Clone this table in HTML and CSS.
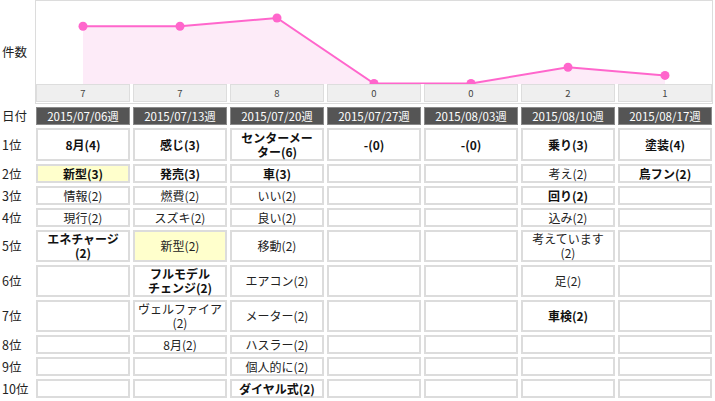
FILE: index.html
```html
<!DOCTYPE html>
<html lang="ja">
<head>
<meta charset="utf-8">
<link rel="stylesheet" href="styles.css">
</head>
<body>
<div class="table">
  <div class="label">件数</div>
  <div class="chart">
    <svg class="plot" width="676" height="83" viewBox="0 0 676 83">
      <polygon class="area" points="47,83 47,25.3 144,25.3 241,17 338,82.5 435,82.5 532,66.3 629,74.4 629,83"/>
      <polyline class="line" points="47,25.3 144,25.3 241,17 338,82.5 435,82.5 532,66.3 629,74.4"/>
      <circle class="dot" cx="47" cy="25.3" r="4.5"/>
      <circle class="dot" cx="144" cy="25.3" r="4.5"/>
      <circle class="dot" cx="241" cy="17" r="4.5"/>
      <circle class="dot" cx="338" cy="82.5" r="4.5"/>
      <circle class="dot" cx="435" cy="82.5" r="4.5"/>
      <circle class="dot" cx="532" cy="66.3" r="4.5"/>
      <circle class="dot" cx="629" cy="74.4" r="4.5"/>
    </svg>
    <div class="counts">
      <div class="count">7</div>
      <div class="count">7</div>
      <div class="count">8</div>
      <div class="count">0</div>
      <div class="count">0</div>
      <div class="count">2</div>
      <div class="count">1</div>
    </div>
  </div>

  <div class="label">日付</div>
  <div class="head">2015/07/06週</div>
  <div class="head">2015/07/13週</div>
  <div class="head">2015/07/20週</div>
  <div class="head">2015/07/27週</div>
  <div class="head">2015/08/03週</div>
  <div class="head">2015/08/10週</div>
  <div class="head">2015/08/17週</div>

  <div class="label">1位</div>
  <div class="cell b">8月(4)</div>
  <div class="cell b">感じ(3)</div>
  <div class="cell b">センターメー<br>ター(6)</div>
  <div class="cell b">-(0)</div>
  <div class="cell b">-(0)</div>
  <div class="cell b">乗り(3)</div>
  <div class="cell b">塗装(4)</div>

  <div class="label">2位</div>
  <div class="cell b hl">新型(3)</div>
  <div class="cell b">発売(3)</div>
  <div class="cell b">車(3)</div>
  <div class="cell"></div>
  <div class="cell"></div>
  <div class="cell">考え(2)</div>
  <div class="cell b">鳥フン(2)</div>

  <div class="label">3位</div>
  <div class="cell">情報(2)</div>
  <div class="cell">燃費(2)</div>
  <div class="cell">いい(2)</div>
  <div class="cell"></div>
  <div class="cell"></div>
  <div class="cell b">回り(2)</div>
  <div class="cell"></div>

  <div class="label">4位</div>
  <div class="cell">現行(2)</div>
  <div class="cell">スズキ(2)</div>
  <div class="cell">良い(2)</div>
  <div class="cell"></div>
  <div class="cell"></div>
  <div class="cell">込み(2)</div>
  <div class="cell"></div>

  <div class="label">5位</div>
  <div class="cell b">エネチャージ<br>(2)</div>
  <div class="cell hl">新型(2)</div>
  <div class="cell">移動(2)</div>
  <div class="cell"></div>
  <div class="cell"></div>
  <div class="cell">考えています<br>(2)</div>
  <div class="cell"></div>

  <div class="label">6位</div>
  <div class="cell"></div>
  <div class="cell b">フルモデル<br>チェンジ(2)</div>
  <div class="cell">エアコン(2)</div>
  <div class="cell"></div>
  <div class="cell"></div>
  <div class="cell">足(2)</div>
  <div class="cell"></div>

  <div class="label">7位</div>
  <div class="cell"></div>
  <div class="cell">ヴェルファイア<br>(2)</div>
  <div class="cell">メーター(2)</div>
  <div class="cell"></div>
  <div class="cell"></div>
  <div class="cell b">車検(2)</div>
  <div class="cell"></div>

  <div class="label">8位</div>
  <div class="cell"></div>
  <div class="cell">8月(2)</div>
  <div class="cell">ハスラー(2)</div>
  <div class="cell"></div>
  <div class="cell"></div>
  <div class="cell"></div>
  <div class="cell"></div>

  <div class="label">9位</div>
  <div class="cell"></div>
  <div class="cell"></div>
  <div class="cell">個人的に(2)</div>
  <div class="cell"></div>
  <div class="cell"></div>
  <div class="cell"></div>
  <div class="cell"></div>

  <div class="label">10位</div>
  <div class="cell"></div>
  <div class="cell"></div>
  <div class="cell b">ダイヤル式(2)</div>
  <div class="cell"></div>
  <div class="cell"></div>
  <div class="cell"></div>
  <div class="cell"></div>
</div>
</body>
</html>
```
FILE: styles.css
```css
html, body {
  margin: 0;
  padding: 0;
  background: #fff;
}
body {
  font-family: "Noto Sans CJK JP", "DejaVu Sans", sans-serif;
  font-size: 12px;
  color: #222;
}
.table {
  display: grid;
  grid-template-columns: 33px repeat(7, 94px);
  grid-template-rows: 104px 18px 33px 19px 19px 19px 32px 32px 32px 19px 19px 19px;
  column-gap: 3px;
  row-gap: 3px;
}
.label {
  display: flex;
  align-items: center;
  padding-left: 2px;
  font-size: 12.5px;
  line-height: 14px;
  color: #222;
}
.chart {
  grid-column: 2 / span 7;
  margin-left: -1px;
  width: 676px;
  border: 1px solid #dcdcdc;
  display: flex;
  flex-direction: column;
}
.plot {
  display: block;
  overflow: hidden;
}
.area {
  fill: #fdebf8;
}
.line {
  fill: none;
  stroke: #ff66cc;
  stroke-width: 2;
}
.dot {
  fill: #ff66cc;
}
.counts {
  display: grid;
  grid-template-columns: repeat(7, 94px);
  column-gap: 3px;
}
.count {
  box-sizing: border-box;
  height: 18px;
  background: #efefef;
  border: 1px solid #dddddd;
  font-size: 9.5px;
  color: #444;
  display: flex;
  align-items: center;
  justify-content: center;
}
.head {
  box-sizing: border-box;
  background: #555;
  border: 1px solid #8a8a8a;
  color: #fff;
  font-size: 11.5px;
  line-height: 14px;
  display: flex;
  align-items: center;
  justify-content: center;
}
.cell {
  box-sizing: border-box;
  border: 2px solid #dcdcdc;
  background: #fff;
  display: flex;
  align-items: center;
  justify-content: center;
  text-align: center;
  font-size: 12px;
  line-height: 14px;
  color: #222;
}
.cell.b {
  font-weight: bold;
  color: #111;
}
.cell.hl {
  background: #ffffcc;
}
```
